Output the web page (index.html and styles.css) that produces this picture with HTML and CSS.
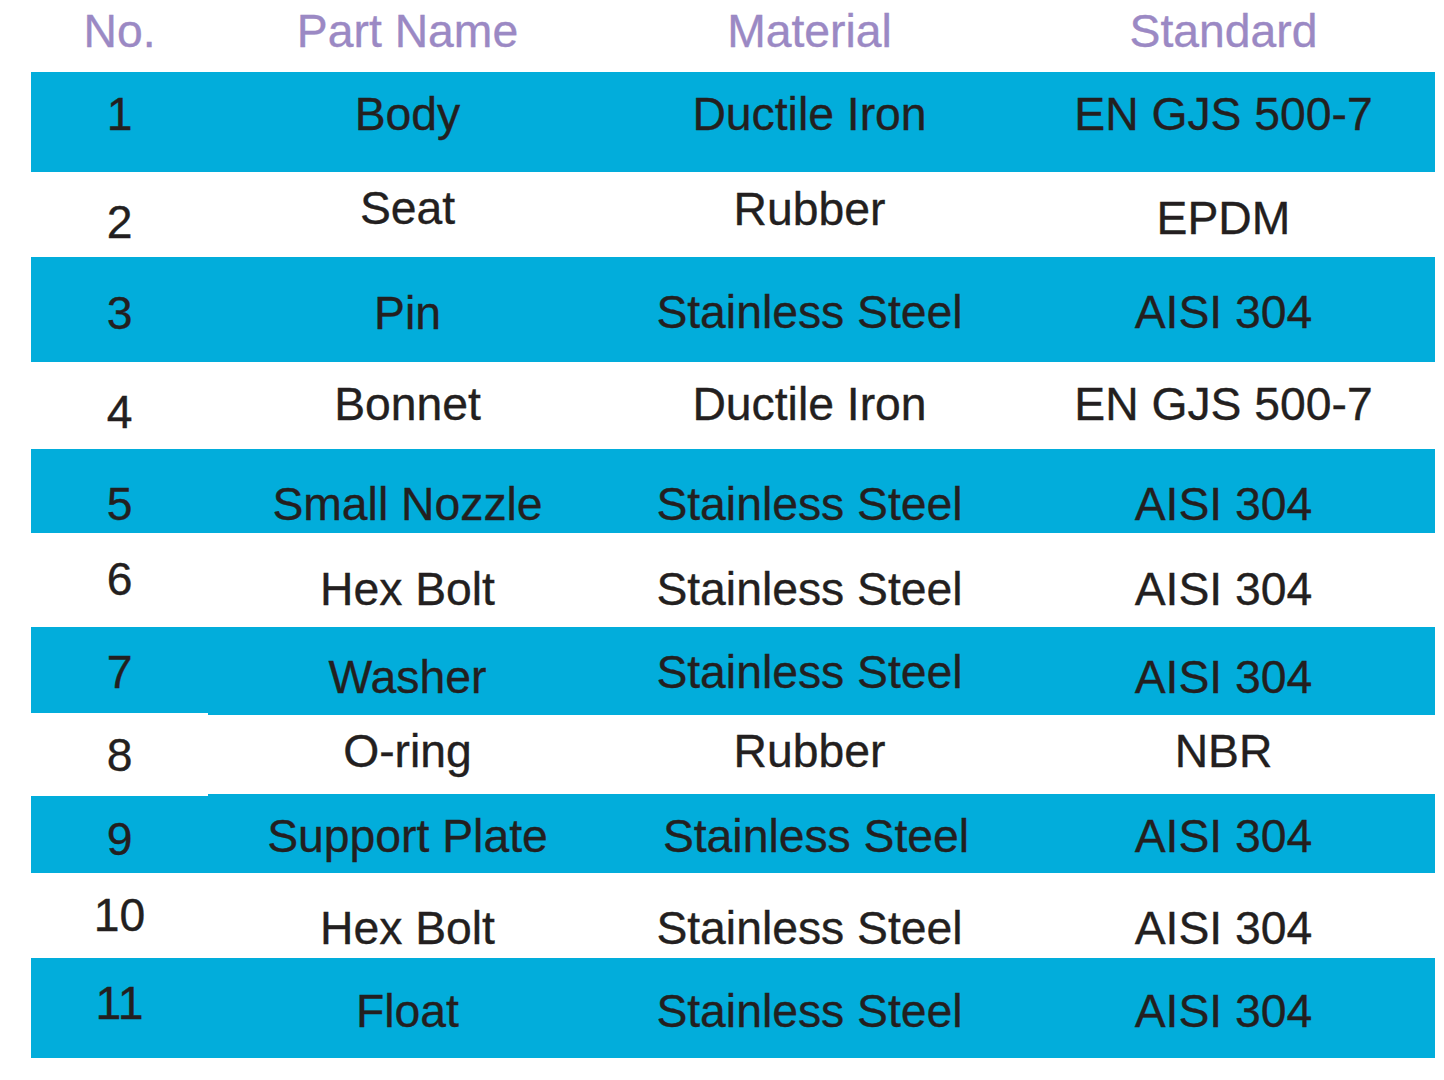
FILE: index.html
```html
<!DOCTYPE html>
<html lang="en">
<head>
<meta charset="utf-8">
<title>Parts List</title>
<link rel="stylesheet" href="styles.css">
</head>
<body>
<div class="table">
  <div class="row head">
    <div class="cell o-4">No.</div>
    <div class="cell o-4">Part Name</div>
    <div class="cell o-4">Material</div>
    <div class="cell o-4">Standard</div>
  </div>
  <div class="row blue r1">
    <div class="cell o-7">1</div>
    <div class="cell o-7">Body</div>
    <div class="cell o-7">Ductile Iron</div>
    <div class="cell o-7">EN GJS 500-7</div>
  </div>
  <div class="row r2">
    <div class="cell o8">2</div>
    <div class="cell o-6">Seat</div>
    <div class="cell o-5">Rubber</div>
    <div class="cell o4">EPDM</div>
  </div>
  <div class="row blue r3">
    <div class="cell o4">3</div>
    <div class="cell o4">Pin</div>
    <div class="cell o3">Stainless Steel</div>
    <div class="cell o3">AISI 304</div>
  </div>
  <div class="row r4">
    <div class="cell o7">4</div>
    <div class="cell o-1">Bonnet</div>
    <div class="cell o-1">Ductile Iron</div>
    <div class="cell o-1">EN GJS 500-7</div>
  </div>
  <div class="row blue r5">
    <div class="cell o14">5</div>
    <div class="cell o14">Small Nozzle</div>
    <div class="cell o14">Stainless Steel</div>
    <div class="cell o14">AISI 304</div>
  </div>
  <div class="row r6">
    <div class="cell">6</div>
    <div class="cell o10">Hex Bolt</div>
    <div class="cell o10">Stainless Steel</div>
    <div class="cell o10">AISI 304</div>
  </div>
  <div class="row blue r7">
    <div class="cell o2 short-bottom">7</div>
    <div class="cell o7">Washer</div>
    <div class="cell o2">Stainless Steel</div>
    <div class="cell o7">AISI 304</div>
  </div>
  <div class="row r8">
    <div class="cell o1">8</div>
    <div class="cell o-3">O-ring</div>
    <div class="cell o-3">Rubber</div>
    <div class="cell o-3">NBR</div>
  </div>
  <div class="row blue r9">
    <div class="cell o6 late-top">9</div>
    <div class="cell o3">Support Plate</div>
    <div class="cell o3 nudge">Stainless Steel</div>
    <div class="cell o3">AISI 304</div>
  </div>
  <div class="row r10">
    <div class="cell">10</div>
    <div class="cell o13">Hex Bolt</div>
    <div class="cell o13">Stainless Steel</div>
    <div class="cell o13">AISI 304</div>
  </div>
  <div class="row blue r11">
    <div class="cell o-4">11</div>
    <div class="cell o4">Float</div>
    <div class="cell o4">Stainless Steel</div>
    <div class="cell o4">AISI 304</div>
  </div>
</div>
</body>
</html>
```

FILE: styles.css
```css
html, body {
  margin: 0;
  padding: 0;
  background: #ffffff;
}

body {
  font-family: "Liberation Sans", Arial, sans-serif;
  font-size: 46.3px;
  color: #231f20;
  -webkit-text-stroke: 0.35px currentColor;
  width: 1444px;
  height: 1080px;
  overflow: hidden;
}

.table {
  margin-left: 31px;
  width: 1404px;
  display: flex;
  flex-direction: column;
}

.row {
  display: grid;
  grid-template-columns: 177px 399px 405px 423px;
  box-sizing: border-box;
}

.blue {
  background: #02addb;
}

.head { height: 72px; color: #9b89c4; }
.r1 { height: 100px; }
.r2 { height: 85px; }
.r3 { height: 105px; }
.r4 { height: 87px; }
.r5 { height: 84px; }
.r6 { height: 94px; }
.r7 { height: 88px; }
.r8 { height: 79px; }
.r9 { height: 79px; }
.r10 { height: 85px; }
.r11 { height: 100px; }

.cell {
  display: flex;
  align-items: center;
  justify-content: center;
  box-sizing: border-box;
  white-space: nowrap;
  line-height: 1.15;
}

/* the first-column band of row 7 ends a little earlier, row 9's starts a little later */
.r7 .short-bottom { box-shadow: inset 0 -2px 0 #ffffff; }
.r9 .late-top { box-shadow: inset 0 2px 0 #ffffff; }

/* vertical nudges of the printed text inside a band */
.o-7 { padding-bottom: 14px; }
.o-6 { padding-bottom: 12px; }
.o-5 { padding-bottom: 10px; }
.o-4 { padding-bottom: 8px; }
.o-3 { padding-bottom: 6px; }
.o-1 { padding-bottom: 2px; }
.o1 { padding-top: 2px; }
.o2 { padding-top: 4px; }
.o3 { padding-top: 6px; }
.o4 { padding-top: 8px; }
.o6 { padding-top: 12px; }
.o7 { padding-top: 14px; }
.o8 { padding-top: 16px; }
.o10 { padding-top: 20px; }
.o13 { padding-top: 26px; }
.o14 { padding-top: 28px; }

.nudge { padding-left: 13px; }
```
